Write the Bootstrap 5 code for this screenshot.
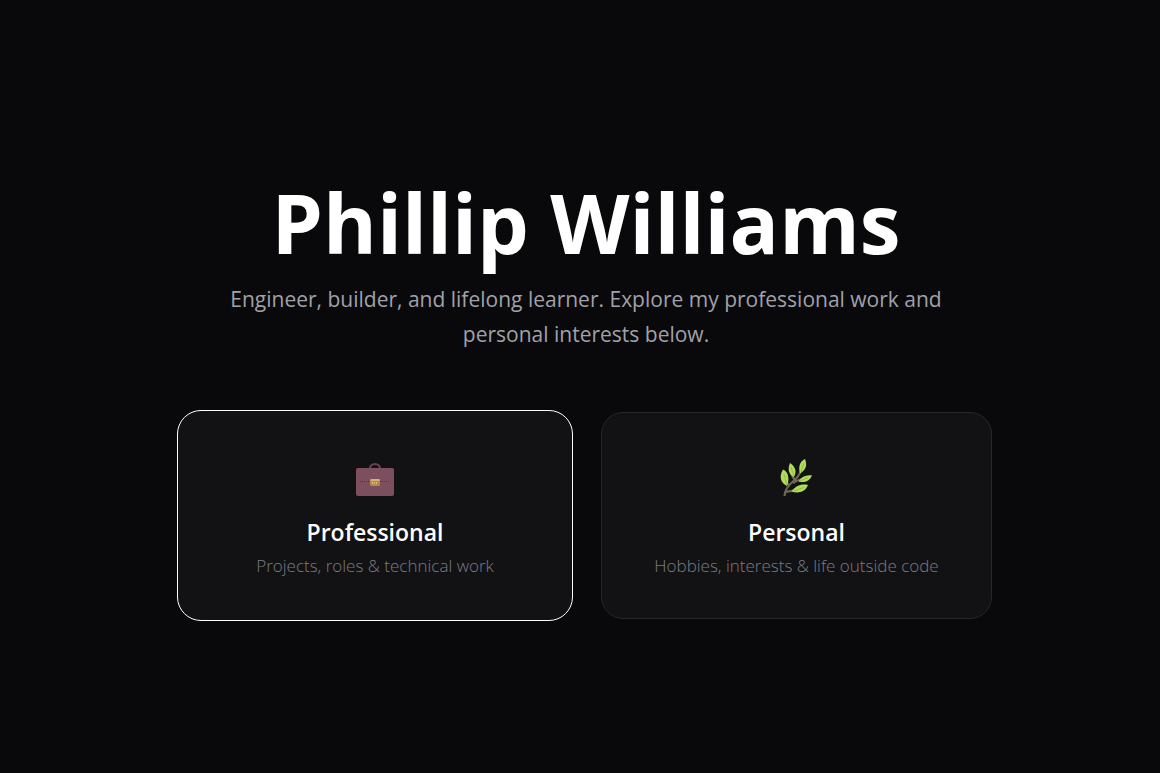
<!DOCTYPE html>
<html lang="en">
<head>
<meta charset="utf-8">
<meta name="viewport" content="width=device-width, initial-scale=1">
<title>Phillip Williams</title>
<link href="https://cdn.jsdelivr.net/npm/bootstrap@5.3.0/dist/css/bootstrap.min.css" rel="stylesheet">
<style>
  body { background: #09090b; color: #fff; font-family: "Segoe UI", "Open Sans", "Noto Sans", sans-serif; }
  .landing { padding: 20px 0 0 12px; }
  .landing-inner { width: 100%; max-width: 812px; }
  .landing-title { font-size: 82px; line-height: 96px; font-weight: 700; margin-bottom: 12px; }
  .landing-intro { max-width: 740px; font-size: 21px; line-height: 35px; color: #a1a1aa; margin-bottom: 60px; }
  .choices { display: grid; grid-template-columns: repeat(auto-fit, minmax(300px, 1fr)); gap: 30px; }
  .choice { background: #121214; border: 1px solid #27272a; border-radius: 22px; color: #fff; padding: 40px 24px 38px; }
  .choice.active { border-color: #fff; border-radius: 24px; margin: -2px -2px -2px -3px; padding: 42px 26px 40px; }
  .choice-icon { width: 44px; height: 48px; }
  .choice-title { font-size: 23px; line-height: 32px; font-weight: 600; margin-top: 15px; }
  .choice-text { font-size: 17px; line-height: 28px; font-weight: 300; color: #7b7b85; margin-top: 4px; }
</style>
</head>
<body>
<main class="landing min-vh-100 d-flex align-items-center justify-content-center">
  <div class="landing-inner text-center">
    <h1 class="landing-title">Phillip Williams</h1>
    <p class="landing-intro mx-auto">Engineer, builder, and lifelong learner. Explore my professional work and personal interests below.</p>
    <nav class="choices" aria-label="Sections">
      <a href="#professional" class="choice active d-flex flex-column align-items-center text-decoration-none">
        <svg class="choice-icon" viewBox="0 0 44 48" aria-hidden="true">
          <path d="M17 16v-.5a5 4.500 0 0 1 10 0v.5" fill="none" stroke="#6b4350" stroke-width="2.200"/>
          <rect x="3" y="15" width="38" height="28" rx="2" fill="#7c4f5e"/>
          <path d="M7 28.500h30" stroke="#523640" stroke-width="1" stroke-dasharray="1 1"/>
          <rect x="17" y="26" width="10" height="7" rx="1.5" fill="#b18a4d"/>
          <path d="M17.500 27h9" stroke="#e2bd7d" stroke-width="1.500"/>
          <path d="M19 30h6" stroke="#f3d27e" stroke-width="1.500" stroke-dasharray="1 1"/>
        </svg>
        <span class="choice-title">Professional</span>
        <span class="choice-text">Projects, roles &amp; technical work</span>
      </a>
      <a href="#personal" class="choice d-flex flex-column align-items-center text-decoration-none">
        <svg class="choice-icon" viewBox="0 0 44 48" aria-hidden="true">
          <path d="M9.500 43c.5-7 4-11 9-15 4-3 6-6 8-12M15 33c-2-1-3-3-4-6M20 27c-2-2-3-4-3-7M18 30c3-2 5-3 9-4M11 39c4-1 7-1 12-2" fill="none" stroke="#6d6851" stroke-width="2.200"/>
          <g fill="#b1dc58">
            <path d="M8 16.500c5 2 7 9 4 16.500-6-3-8.500-9-4-16.500z"/>
            <path d="M15 10c6 4 7 10 3.500 14-5-3-6-8-3.500-14z"/>
            <path d="M30 6c2.500 6 1 11-5 14.500-2-7 0-12 5-14.500z"/>
            <path d="M37 22.500c-2.500 6-8 7.500-13.500 6 3-5 8-7 13.500-6z"/>
            <path d="M33 32c-3 7.500-10 8.500-16.500 6.500 4-6 10-8 16.500-6.500z"/>
          </g>
          <path d="M9 21l3 11M16 14l3 9M29 10l-3 9M33 24.500l-8 3.500M29 34.500l-10 3.500" fill="none" stroke="#8fbd48" stroke-width="1"/>
        </svg>
        <span class="choice-title">Personal</span>
        <span class="choice-text">Hobbies, interests &amp; life outside code</span>
      </a>
    </nav>
  </div>
</main>
<script src="https://cdn.jsdelivr.net/npm/bootstrap@5.3.0/dist/js/bootstrap.bundle.min.js"></script>
</body>
</html>
